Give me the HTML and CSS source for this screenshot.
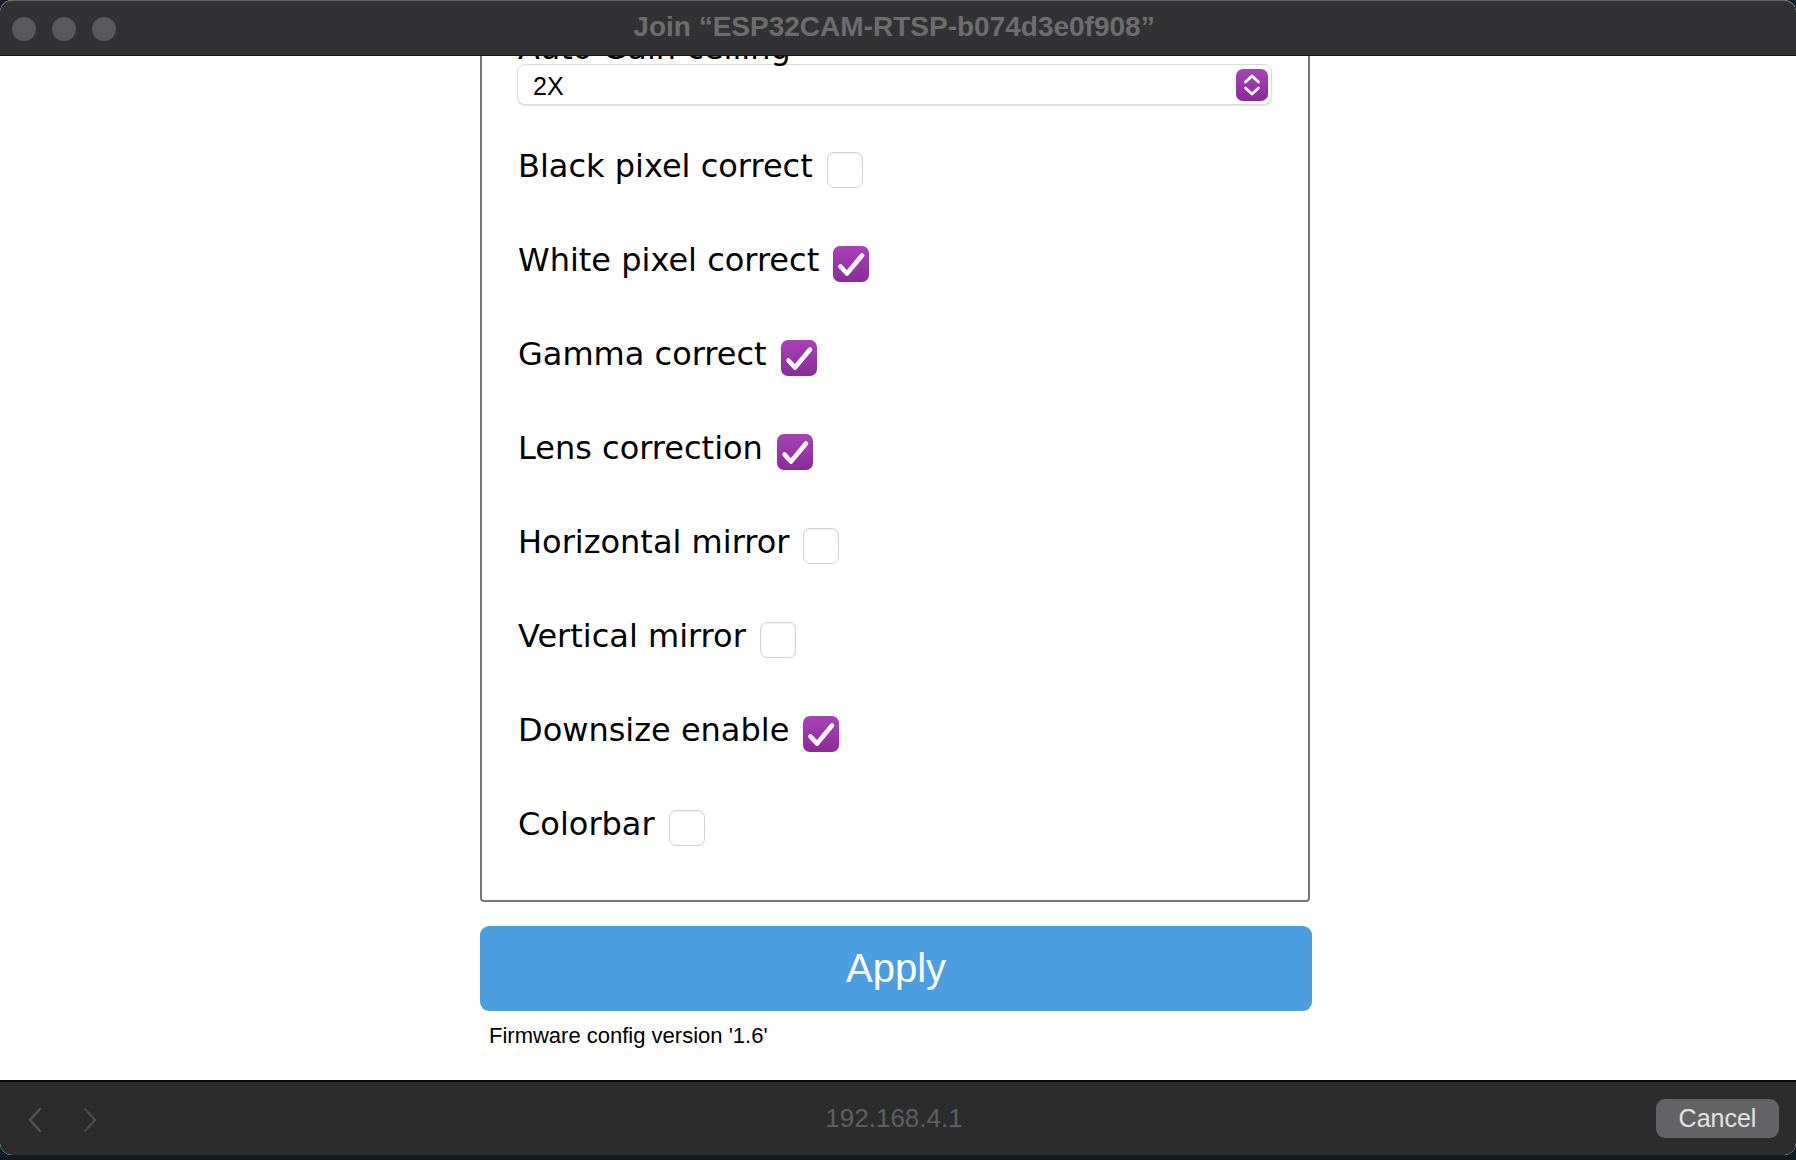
FILE: index.html
```html
<!DOCTYPE html>
<html lang="en">
<head>
<meta charset="utf-8">
<title>Join ESP32CAM-RTSP</title>
<link rel="stylesheet" href="styles.css">
</head>
<body>
<div class="window">
  <header class="titlebar">
    <div class="lights"><span class="light"></span><span class="light"></span><span class="light"></span></div>
    <div class="title">Join “ESP32CAM-RTSP-b074d3e0f908”</div>
    <div class="spacer"></div>
  </header>
  <main class="viewport">
    <div class="page">
      <div class="group">
        <label class="field-label">Auto Gain ceiling</label>
        <div class="select">
          <span class="select-value">2X</span>
          <svg class="stepper" width="32" height="32" viewBox="0 0 32 32">
            <defs><linearGradient id="pg" x1="0" y1="0" x2="0" y2="1"><stop offset="0" stop-color="#a845b6"/><stop offset="1" stop-color="#8c289d"/></linearGradient></defs>
            <rect x="0" y="0" width="32" height="32" rx="7" fill="url(#pg)"/>
            <path d="M9.5 13 L16 7 L22.5 13" fill="none" stroke="#fff" stroke-width="2.8" stroke-linecap="round" stroke-linejoin="round"/>
            <path d="M9.5 19 L16 25 L22.5 19" fill="none" stroke="#fff" stroke-width="2.8" stroke-linecap="round" stroke-linejoin="round"/>
          </svg>
        </div>
        <div class="rows">
          <div class="row"><span class="row-label">Black pixel correct</span><span class="cb"></span></div>
          <div class="row"><span class="row-label">White pixel correct</span><span class="cb cb-on"><svg width="36" height="36" viewBox="0 0 36 36"><path d="M7.5 20.5 L14 27.5 L29 9.5" fill="none" stroke="#fff" stroke-width="4.6" stroke-linecap="round" stroke-linejoin="round"/></svg></span></div>
          <div class="row"><span class="row-label">Gamma correct</span><span class="cb cb-on"><svg width="36" height="36" viewBox="0 0 36 36"><path d="M7.5 20.5 L14 27.5 L29 9.5" fill="none" stroke="#fff" stroke-width="4.6" stroke-linecap="round" stroke-linejoin="round"/></svg></span></div>
          <div class="row"><span class="row-label">Lens correction</span><span class="cb cb-on"><svg width="36" height="36" viewBox="0 0 36 36"><path d="M7.5 20.5 L14 27.5 L29 9.5" fill="none" stroke="#fff" stroke-width="4.6" stroke-linecap="round" stroke-linejoin="round"/></svg></span></div>
          <div class="row"><span class="row-label">Horizontal mirror</span><span class="cb"></span></div>
          <div class="row"><span class="row-label">Vertical mirror</span><span class="cb"></span></div>
          <div class="row"><span class="row-label">Downsize enable</span><span class="cb cb-on"><svg width="36" height="36" viewBox="0 0 36 36"><path d="M7.5 20.5 L14 27.5 L29 9.5" fill="none" stroke="#fff" stroke-width="4.6" stroke-linecap="round" stroke-linejoin="round"/></svg></span></div>
          <div class="row"><span class="row-label">Colorbar</span><span class="cb"></span></div>
        </div>
      </div>
      <button class="apply">Apply</button>
      <p class="version">Firmware config version '1.6'</p>
    </div>
  </main>
  <footer class="toolbar">
    <div class="nav">
      <svg width="14" height="24" viewBox="0 0 14 24"><path d="M12 1 L2 12 L12 23" fill="none" stroke="#555557" stroke-width="2.2" stroke-linecap="round" stroke-linejoin="round"/></svg>
      <svg width="14" height="24" viewBox="0 0 14 24"><path d="M2 1 L12 12 L2 23" fill="none" stroke="#4a4a4c" stroke-width="2.2" stroke-linecap="round" stroke-linejoin="round"/></svg>
    </div>
    <div class="url">192.168.4.1</div>
    <div class="actions"><button class="cancel">Cancel</button></div>
  </footer>
</div>
</body>
</html>
```

FILE: styles.css
```css
html, body {
  margin: 0;
  padding: 0;
}
body {
  width: 1796px;
  height: 1160px;
  background: #0e1d23;
  overflow: hidden;
  font-family: "Liberation Sans", Arial, sans-serif;
}
.window {
  height: 1155px;
  display: flex;
  flex-direction: column;
  border-radius: 12px;
  overflow: hidden;
  background: #ffffff;
}
.titlebar {
  height: 56px;
  flex: none;
  box-sizing: border-box;
  background: #323234;
  border-top: 1px solid #626264;
  border-bottom: 1px solid #141414;
  border-radius: 12px 12px 0 0;
  display: grid;
  grid-template-columns: 1fr auto 1fr;
  align-items: center;
}
.lights {
  display: flex;
  gap: 16px;
  padding-left: 12px;
  padding-top: 2px;
}
.light {
  width: 24px;
  height: 24px;
  border-radius: 50%;
  background: #59595b;
}
.title {
  font-weight: bold;
  font-size: 28px;
  color: #6d6d6f;
  padding-bottom: 2px;
  margin-right: 8px;
}
.viewport {
  flex: 1;
  overflow: hidden;
  background: #ffffff;
}
.page {
  margin-top: -48px;
  margin-left: 480px;
  width: 832px;
}
.group {
  width: 830px;
  box-sizing: border-box;
  border: 2px solid #777779;
  border-radius: 4px;
  padding: 20px 36px 29px 36px;
}
.field-label {
  display: block;
  font-family: "DejaVu Sans", Verdana, sans-serif;
  font-size: 32px;
  line-height: 36px;
  margin-bottom: -2px;
  color: #000;
}
.select {
  height: 41px;
  box-sizing: border-box;
  margin-left: -1px;
  width: 755px;
  border: 1px solid #dcdcdc;
  border-radius: 8px;
  box-shadow: 0 1px 1px rgba(0,0,0,0.12);
  display: flex;
  align-items: center;
  justify-content: space-between;
  padding: 0 3px 0 15px;
  background: #fff;
}
.select-value {
  font-size: 25px;
  color: #000;
  padding-top: 4px;
}
.stepper {
  display: block;
}
.rows {
  margin-top: 14px;
}
.row {
  height: 94px;
  display: flex;
  align-items: center;
}
.row-label {
  font-family: "DejaVu Sans", Verdana, sans-serif;
  font-size: 32px;
  color: #000;
}
.cb {
  width: 36px;
  height: 36px;
  box-sizing: border-box;
  margin-left: 14px;
  margin-top: 7px;
  border: 1.5px solid #d2d2d2;
  border-radius: 7px;
  background: #fff;
  box-shadow: inset 0 1px 2px rgba(0,0,0,0.06);
  display: flex;
}
.cb-on {
  border: none;
  background: linear-gradient(#a743b5, #8b289c);
  box-shadow: none;
}
.cb svg {
  display: block;
}
.apply {
  display: block;
  margin-top: 24px;
  width: 832px;
  height: 85px;
  border: none;
  border-radius: 9px;
  background: #4b9fe1;
  color: #fff;
  font-family: "Liberation Sans", Arial, sans-serif;
  font-size: 40px;
  padding: 0;
}
.version {
  margin: 12px 0 0 9px;
  font-size: 22px;
  color: #000;
}
.toolbar {
  height: 75px;
  flex: none;
  box-sizing: border-box;
  background: #2c2c2d;
  border-top: 2px solid #0b0b0b;
  border-radius: 0 0 12px 12px;
  display: grid;
  grid-template-columns: 1fr auto 1fr;
  align-items: center;
}
.nav {
  display: flex;
  gap: 41px;
  padding-left: 28px;
  padding-top: 2px;
}
.nav svg {
  display: block;
}
.url {
  font-size: 26px;
  color: #5f5f61;
  margin-right: 8px;
}
.actions {
  display: flex;
  justify-content: flex-end;
  padding-right: 17px;
}
.cancel {
  width: 123px;
  height: 39px;
  border: none;
  border-radius: 9px;
  background: #636365;
  color: #e2e2e2;
  font-family: "Liberation Sans", Arial, sans-serif;
  font-size: 25px;
  padding: 0;
}
```
